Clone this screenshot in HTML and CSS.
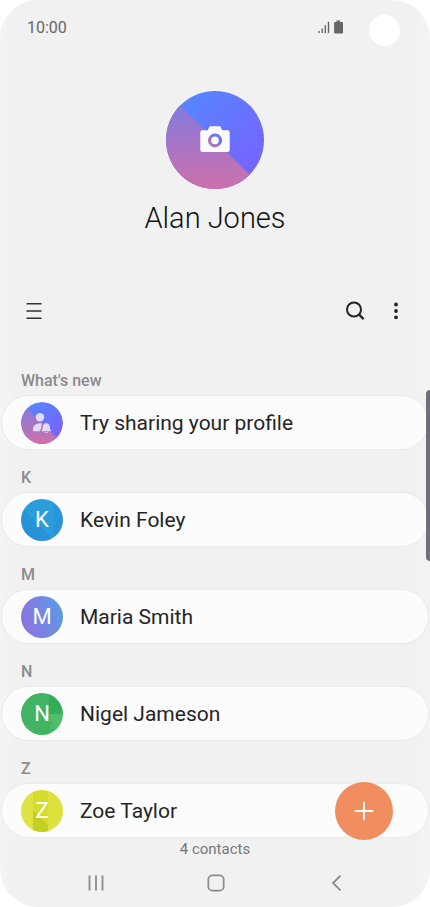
FILE: index.html
```html
<!DOCTYPE html>
<html lang="en">
<head>
<meta charset="utf-8">
<meta name="viewport" content="width=device-width, initial-scale=1">
<title>Contacts</title>
<link rel="stylesheet" href="styles.css">
</head>
<body>
<div class="phone">
  <header class="status">
    <time class="clock">10:00</time>
    <svg class="signal" width="28" height="16" viewBox="0 0 28 16" aria-hidden="true">
      <path d="M2 11v2M5.200 8.500v4.500M8.300 5.300v7.700M11.500 1.800v11.200" stroke="#666" stroke-width="1.400"/>
      <path d="M19.500 .6h3.600v1.500h2q.9 0 .9 .9v9.600q0 .9-.9 .9h-7.100q-.9 0-.9-.9V3q0-.9.900-.9h1.500z" fill="#666"/>
    </svg>
    <span class="lens"></span>
  </header>

  <section class="profile">
    <button class="photo" type="button" aria-label="Change photo">
      <svg width="98" height="98" viewBox="0 0 98 98" aria-hidden="true">
        <defs>
          <linearGradient id="blue" x1="0" y1="0" x2=".9" y2=".9"><stop offset="0" stop-color="#508cff"/><stop offset="1" stop-color="#7861ff"/></linearGradient>
          <linearGradient id="pink" gradientUnits="userSpaceOnUse" x1="0" y1="14" x2="0" y2="98"><stop offset="0" stop-color="#8579df"/><stop offset="1" stop-color="#cd70a9"/></linearGradient>
          <linearGradient id="pink-small" gradientUnits="userSpaceOnUse" x1="0" y1="6" x2="0" y2="42"><stop offset="0" stop-color="#8579df"/><stop offset="1" stop-color="#cd70a9"/></linearGradient>
          <clipPath id="disc"><circle cx="49" cy="49" r="49"/></clipPath>
          <clipPath id="disc-small"><circle cx="21" cy="21" r="21"/></clipPath>
        </defs>
        <circle cx="49" cy="49" r="49" fill="url(#blue)"/>
        <path clip-path="url(#disc)" d="M0 0L98 98H0Z" fill="url(#pink)"/>
        <path fill-rule="evenodd" d="M44.500 35.300h9q1 0 1.400 1l1.300 3h5.300q2.200 0 2.200 2.200v17.200q0 2.200-2.200 2.200h-25q-2.200 0-2.200-2.200V41.500q0-2.200 2.200-2.200h5.300l1.300-3q.4-1 1.400-1zM49 42.400a7 7 0 1 0 0 14 7 7 0 0 0 0-14z" fill="#fcfcff"/>
        <circle cx="49" cy="49.400" r="3.800" fill="#fcfcff"/>
      </svg>
    </button>
    <h1 class="owner">Alan Jones</h1>
  </section>

  <div class="toolbar">
    <button class="tool menu" type="button" aria-label="Menu">
      <svg width="16" height="18" viewBox="0 0 16 18" aria-hidden="true"><path d="M.5 1.700h15M.5 9h15M.5 16.300h15" stroke="#303030" stroke-width="1.400"/></svg>
    </button>
    <button class="tool" type="button" aria-label="Search">
      <svg width="20" height="20" viewBox="0 0 20 20" fill="none" stroke="#252525" aria-hidden="true"><circle cx="9" cy="8.500" r="7" stroke-width="2"/><path d="M13.900 13.400l4.700 4.700" stroke-width="2.300"/></svg>
    </button>
    <button class="tool" type="button" aria-label="More options">
      <svg width="6" height="18" viewBox="0 0 6 18" fill="#252525" aria-hidden="true"><circle cx="3" cy="2.500" r="1.900"/><circle cx="3" cy="9" r="1.900"/><circle cx="3" cy="15.300" r="1.900"/></svg>
    </button>
  </div>

  <main class="list">
    <h2 class="heading">What's new</h2>
    <a class="card" href="#share">
      <svg class="avatar" viewBox="0 0 42 42" aria-hidden="true">
        <circle cx="21" cy="21" r="21" fill="url(#blue)"/>
        <path clip-path="url(#disc-small)" d="M0 0L42 42H0Z" fill="url(#pink-small)"/>
        <g fill="#e3dafa"><circle cx="19" cy="15.300" r="4.200"/><path d="M12 29.300v-1.500q0-4.700 4-6.100 2.500-.7 4.700-.4-.3 1.500-.3 3.400-.2 2.500-1.700 4.600z"/><path d="M25.300 20.900q3.500.5 3.500 4 0 2.200 1 3.400v1h-9v-1q1-1.200 1-3.400 0-3.500 3.500-4zM23.400 30h3.800q-1.900 1.700-3.800 0z"/></g>
      </svg>
      <span class="name">Try sharing your profile</span>
    </a>

    <h2 class="heading">K</h2>
    <a class="card" href="#kevin">
      <span class="avatar kevin">K</span>
      <span class="name">Kevin Foley</span>
    </a>

    <h2 class="heading">M</h2>
    <a class="card" href="#maria">
      <span class="avatar maria">M</span>
      <span class="name">Maria Smith</span>
    </a>

    <h2 class="heading">N</h2>
    <a class="card" href="#nigel">
      <span class="avatar nigel">N</span>
      <span class="name">Nigel Jameson</span>
    </a>

    <h2 class="heading">Z</h2>
    <a class="card" href="#zoe">
      <span class="avatar zoe">Z</span>
      <span class="name">Zoe Taylor</span>
    </a>
    <p class="count">4 contacts</p>
    <button class="add" type="button" aria-label="Add contact">
      <svg width="20" height="20" viewBox="0 0 20 20" aria-hidden="true"><path d="M10 .8v18.400M.8 10h18.400" stroke="#fffaf5" stroke-width="2"/></svg>
    </button>
    <span class="scrollbar"></span>
  </main>

  <nav class="nav">
    <button type="button" aria-label="Recent apps"><svg width="18" height="18" viewBox="0 0 18 18" aria-hidden="true"><path d="M2.500 1.500v15M9 1.500v15M15.500 1.500v15" stroke="#8a8a8a" stroke-width="1.800"/></svg></button>
    <button type="button" aria-label="Home"><svg width="18" height="18" viewBox="0 0 18 18" aria-hidden="true"><rect x="1.300" y="1.300" width="15.400" height="15.400" rx="4.200" fill="none" stroke="#8a8a8a" stroke-width="1.700"/></svg></button>
    <button type="button" aria-label="Back"><svg width="18" height="18" viewBox="0 0 18 18" aria-hidden="true"><path d="M13.500 1.700L6 9l7.500 7.300" fill="none" stroke="#8a8a8a" stroke-width="1.800"/></svg></button>
  </nav>
</div>
</body>
</html>
```
FILE: styles.css
```css
* {
  box-sizing: border-box;
}

body {
  margin: 0;
  background: #fff;
  color: #252525;
  font-family: Roboto, "Liberation Sans", sans-serif;
}

button {
  display: flex;
  align-items: center;
  justify-content: center;
  padding: 0;
  border: 0;
  background: none;
}

h1,
h2,
p {
  margin: 0;
}

.phone {
  min-height: 100vh;
  display: flex;
  flex-direction: column;
  overflow: hidden;
  border-radius: 38px;
  background: linear-gradient(90deg, #f4f4f4, #f1f1f1 16px, #f1f1f1 calc(100% - 16px), #f4f4f4);
}

.status {
  display: flex;
  align-items: center;
  height: 56px;
  padding: 0 30px 0 27px;
}

.clock {
  flex: 1;
  color: #666;
  font-size: 16px;
  line-height: 20px;
}

.signal {
  margin-right: 24px;
}

.lens {
  width: 31px;
  height: 31px;
  margin-top: 4px;
  border-radius: 50%;
  background: #fff;
}

.profile {
  display: flex;
  flex-direction: column;
  align-items: center;
  gap: 11px;
  padding: 35px 0 51px;
}

.owner {
  color: #111;
  font-size: 29px;
  font-weight: 300;
  line-height: 36px;
}

.toolbar {
  display: flex;
  padding: 0 14px 0 13px;
}

.tool {
  width: 41px;
  height: 48px;
}

.menu {
  margin-right: auto;
}

.list {
  position: relative;
  padding-top: 18px;
}

.heading {
  height: 42px;
  padding: 18px 21px 0;
  color: #8b8b8b;
  font-size: 16px;
  font-weight: 500;
  line-height: 20px;
}

.card {
  display: flex;
  align-items: center;
  gap: 17px;
  height: 55px;
  margin: 0 1px;
  padding: 0 19px;
  border: 1px solid #eaeaea;
  border-radius: 28px;
  background: #fcfcfc;
  color: #252525;
  text-decoration: none;
}

.avatar {
  display: grid;
  place-items: center;
  flex: none;
  width: 42px;
  height: 42px;
  border-radius: 50%;
  color: #fff;
  font-size: 22px;
  line-height: 24px;
}

.kevin {
  background:
    linear-gradient(90deg, transparent 78%, #2a94da 78%),
    linear-gradient(45deg, #2892d8 40%, #2b9ddd 40%);
}

.maria {
  background: linear-gradient(75deg, #9170df, #7983e5 48%, #5d98e0 85%);
}

.nigel {
  background: conic-gradient(from 0deg at 66% 50%, #34ad59 25%, #50be6d 25% 40%, #41b464 50%);
}

.zoe {
  background:
    linear-gradient(90deg, #dde343 28%, transparent 28% 64%, #dce23b 64%),
    linear-gradient(45deg, #c3cf22 40%, #d5dc2c 40%);
}

.name {
  font-size: 21px;
  line-height: 26px;
}

.count {
  padding-top: 1px;
  color: #777;
  font-size: 15px;
  line-height: 20px;
  text-align: center;
}

.add {
  position: absolute;
  right: 37px;
  bottom: 19px;
  width: 58px;
  height: 58px;
  border-radius: 50%;
  background: #f08e60;
}

.scrollbar {
  position: absolute;
  top: 55px;
  right: 0;
  width: 4px;
  height: 171px;
  border-radius: 4px 0 0 4px;
  background: #706f7f;
}

.nav {
  display: grid;
  grid-template-columns: repeat(3, 1fr);
  flex: 1;
  min-height: 46px;
  padding: 0 34px 0 36px;
}
```
